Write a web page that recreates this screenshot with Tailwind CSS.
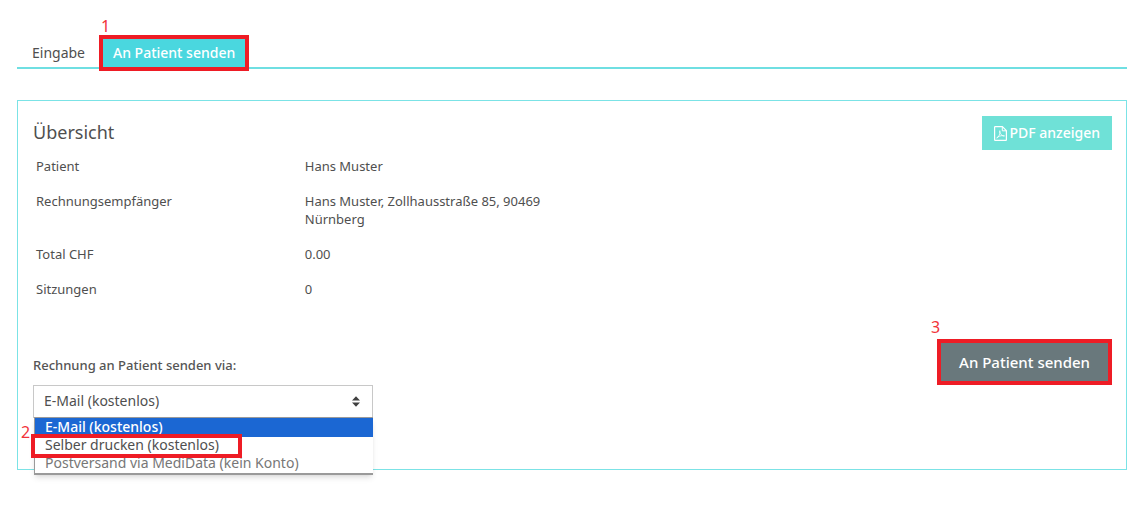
<!DOCTYPE html>
<html lang="de">

<head>
    <meta charset="UTF-8">
    <meta name="viewport" content="width=device-width, initial-scale=1.0">
    <title>Rechnung an Patient senden</title>
    <script src="https://cdn.jsdelivr.net/npm/@tailwindcss/browser@4"></script>
</head>

<body class="bg-white font-['Noto_Sans','Open_Sans',sans-serif] text-[13px] leading-[18px] text-[#4f4f4f]">
    <div class="pt-[38px] pl-[17px] pr-[10px] pb-9">
        <!-- Reiter -->
        <nav class="flex items-stretch border-b-2 border-[#6fdfe2]">
            <a href="#" class="flex items-center h-[29px] pl-[15px] pr-[17px] text-sm">Eingabe</a>
            <a href="#" class="relative flex items-center h-[29px] px-[11px] text-sm font-medium text-white bg-[#4ad7df]">
                An Patient senden
                <span class="absolute -inset-x-[3px] -top-[3px] -bottom-1 border-4 border-[#ee1c25]"></span>
                <span class="absolute -left-px -top-5 text-base leading-4 font-normal text-[#f2323a]">1</span>
            </a>
        </nav>

        <!-- Übersicht -->
        <main class="mt-[31px] p-[15px] pr-[14px] border border-[#7be3e6]">
            <div class="flex items-start justify-between h-[34px]">
                <h1 class="text-lg leading-8">Übersicht</h1>
                <button type="button" class="flex items-center h-[34px] px-3 gap-[2px] text-sm font-medium text-white bg-[#6fe1d7]">
                    <svg class="w-[13px] h-[15px]" viewBox="0 0 13 15" fill="none" stroke="currentColor" stroke-linejoin="round">
                        <path d="M.6 1.2q0-.6.6-.6H8.4L12.4 4.6V13.8q0 .6-.6.6H1.2q-.6 0-.6-.6Z" stroke-width="1.2" />
                        <path d="M8.3.8V4.8H12.2" />
                        <path d="M3 12.2C4.5 11.2 6.2 7.8 6.1 5.3C6 4.4 5.4 4.6 5.5 5.5C5.8 7.8 7.8 9.8 9.9 10.2C10.9 10.3 10.7 9.5 9.6 9.5C7.2 9.5 4.2 10.3 3 11.5C2.7 11.9 2.7 12.3 3 12.2Z" stroke-width=".8" />
                    </svg>
                    PDF anzeigen
                </button>
            </div>

            <table class="w-1/2 table-fixed text-left">
                <tbody class="align-top">
                    <tr>
                        <th scope="row" class="px-[3px] pt-[7px] pb-[10px] font-normal">Patient</th>
                        <td class="px-[2px] pt-[7px] pb-[10px]">Hans Muster</td>
                    </tr>
                    <tr>
                        <th scope="row" class="px-[3px] pt-[7px] pb-[10px] font-normal">Rechnungsempfänger</th>
                        <td class="px-[2px] pt-[7px] pb-[10px]">Hans Muster, Zollhausstraße 85, 90469 Nürnberg</td>
                    </tr>
                    <tr>
                        <th scope="row" class="px-[3px] pt-[7px] pb-[10px] font-normal">Total CHF</th>
                        <td class="px-[2px] pt-[7px] pb-[10px]">0.00</td>
                    </tr>
                    <tr>
                        <th scope="row" class="px-[3px] pt-[7px] pb-[10px] font-normal">Sitzungen</th>
                        <td class="px-[2px] pt-[7px] pb-[10px]">0</td>
                    </tr>
                </tbody>
            </table>

            <!-- Versand -->
            <div class="flex items-start justify-between mt-[31px] pb-9">
                <div class="w-[340px] pt-[17px]">
                    <label for="versand" class="block font-medium text-[#555555]">Rechnung an Patient senden via:</label>
                    <div class="relative mt-[11px]">
                        <select id="versand" class="block w-full h-[33px] pl-[10px] pb-[2px] appearance-none border border-[#c8c8c8] bg-white text-sm">
                            <option>E-Mail (kostenlos)</option>
                            <option>Selber drucken (kostenlos)</option>
                            <option disabled>Postversand via MediData (kein Konto)</option>
                        </select>
                        <svg class="absolute right-[13px] top-[11px] w-2 h-[11px] pointer-events-none" viewBox="0 0 8 11" fill="#404040">
                            <path d="M0 4.5L4 .3L8 4.5ZM0 6.5H8L4 10.7Z" />
                        </svg>

                        <!-- geöffnete Auswahlliste -->
                        <ul class="absolute left-px right-0 top-8 border border-[#9a9a9a] border-b-2 border-r-0 bg-white text-sm leading-4 shadow-md">
                            <li class="h-[19px] pl-[10px] leading-[18px] font-medium text-white bg-[#1b67d3]">E-Mail (kostenlos)</li>
                            <li class="relative h-[18px] pl-[10px]">
                                Selber drucken (kostenlos)
                                <span class="absolute -left-1 -top-[3px] w-[211px] h-6 border-4 border-[#ee1c25]"></span>
                                <span class="absolute -left-[14px] -top-[13px] text-base leading-4 text-[#f2323a]">2</span>
                            </li>
                            <li class="h-[18px] pl-[10px] text-[#777777]">Postversand via MediData (kein Konto)</li>
                        </ul>
                    </div>
                </div>
                <button type="button" class="relative h-[46px] px-[18px] border-4 border-[#ee1c25] bg-[#69787c] text-[15px] font-medium text-white">
                    An Patient senden
                    <span class="absolute -left-[10px] -top-6 text-base leading-4 font-normal text-[#f2323a]">3</span>
                </button>
            </div>
        </main>
    </div>
</body>

</html>
